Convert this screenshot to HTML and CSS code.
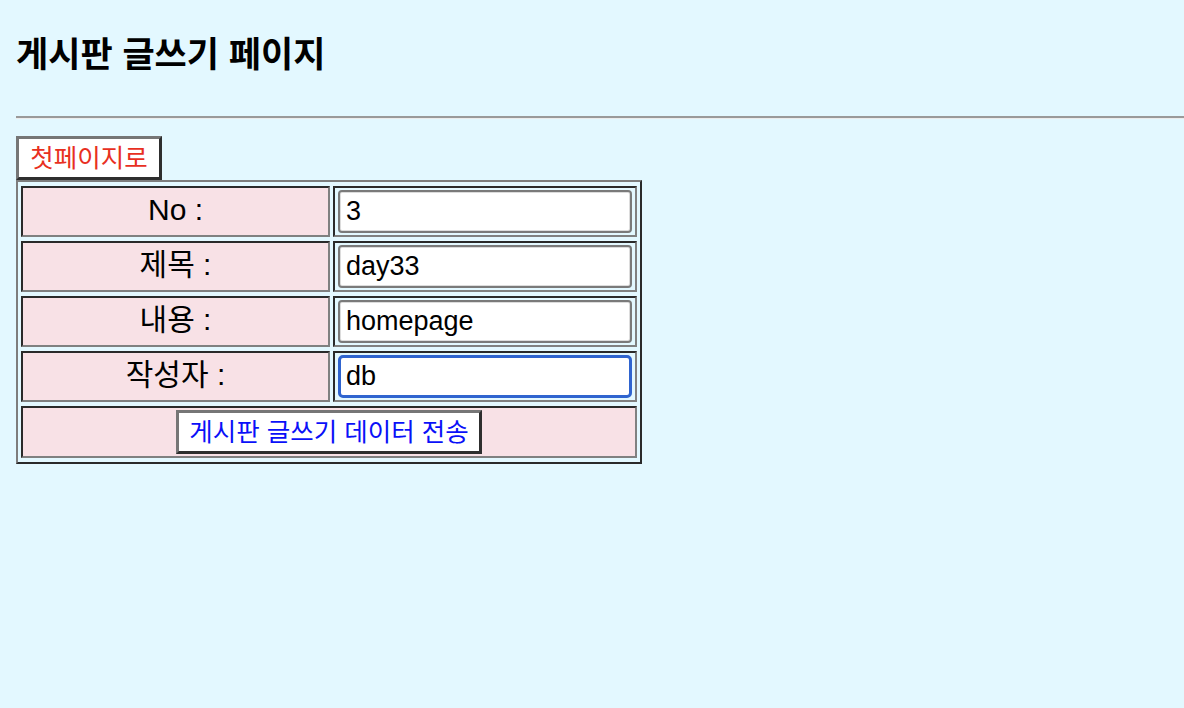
FILE: index.html
```html
<!DOCTYPE html>
<html lang="ko">
<head>
<meta charset="utf-8">
<title>게시판 글쓰기 페이지</title>
<link rel="stylesheet" href="styles.css">
</head>
<body>
<h1 class="page-title">게시판 글쓰기 페이지</h1>
<hr class="divider">
<div class="toolbar">
  <button class="btn btn-home" type="button">첫페이지로</button>
</div>
<form class="write-form">
  <table class="form-table">
    <tr>
      <td class="label">No :</td>
      <td class="field"><input class="text-input" type="text" value="3"></td>
    </tr>
    <tr>
      <td class="label">제목 :</td>
      <td class="field"><input class="text-input" type="text" value="day33"></td>
    </tr>
    <tr>
      <td class="label">내용 :</td>
      <td class="field"><input class="text-input" type="text" value="homepage"></td>
    </tr>
    <tr>
      <td class="label">작성자 :</td>
      <td class="field"><input class="text-input focused" type="text" value="db"></td>
    </tr>
    <tr>
      <td class="submit-cell" colspan="2"><button class="btn btn-submit" type="button">게시판 글쓰기 데이터 전송</button></td>
    </tr>
  </table>
</form>
</body>
</html>
```

FILE: styles.css
```css
html, body {
  margin: 0;
  padding: 0;
}

body {
  background: #e3f8ff;
  padding: 0 0 0 16px;
  font-family: "Liberation Sans", "Noto Sans CJK KR", sans-serif;
  color: #000;
}

.page-title {
  margin: 0;
  padding-top: 32px;
  font-size: 35px;
  line-height: 40px;
  font-weight: bold;
  font-family: "Noto Sans CJK KR", "Liberation Sans", sans-serif;
}

.divider {
  margin: 44px 0 0 0;
  height: 0;
  border: 0;
  border-top: 2px solid #9a9a9a;
  border-bottom: 1px solid #ececec;
}

.toolbar {
  display: flex;
  margin-top: 17px;
}

.btn {
  background: #fff;
  border: 3px solid;
  border-color: #767676 #2e2e2e #2e2e2e #767676;
  font-family: "Liberation Sans", "Noto Sans CJK KR", sans-serif;
  font-size: 25.5px;
  height: 44px;
  line-height: 36px;
  padding: 0;
  margin: 0;
  border-radius: 0;
}

.btn-home {
  color: #e8301f;
  width: 146px;
}

.btn-submit {
  color: #0a10f8;
  width: 306px;
}

.write-form {
  margin: 0;
}

.form-table {
  border: 2px solid;
  border-color: #7d7d7d #2a2a2a #2a2a2a #7d7d7d;
  border-collapse: separate;
  border-spacing: 3px 4px;
  width: 626px;
}

.form-table td {
  border: 2px solid;
  border-color: #2a2a2a #808080 #808080 #2a2a2a;
}

.label {
  width: 309px;
  background: #f8e1e6;
  text-align: center;
  font-family: "Liberation Sans", "Noto Sans CJK KR", sans-serif;
  font-size: 30px;
  line-height: 36px;
  padding: 0 0 4px 0;
  height: 51px;
  box-sizing: border-box;
}

.field {
  padding: 2px 3px;
  height: 51px;
  box-sizing: border-box;
}

.text-input {
  display: block;
  box-sizing: border-box;
  width: 100%;
  height: 43px;
  margin: 0;
  border: 2px solid #7a7a7a;
  border-radius: 4px;
  background: #fff;
  font-family: "Liberation Sans", sans-serif;
  font-size: 27px;
  padding: 0 6px;
  color: #000;
  box-shadow: inset 0 0 0 1px #dcdcdc;
}

.text-input.focused {
  border: 3px solid #2f64cf;
  border-radius: 5px;
  box-shadow: none;
  padding: 0 5px;
}

.submit-cell {
  background: #f8e1e6;
  text-align: center;
  padding: 2px;
  height: 52px;
  box-sizing: border-box;
}

.submit-cell .btn {
  vertical-align: middle;
}
```
